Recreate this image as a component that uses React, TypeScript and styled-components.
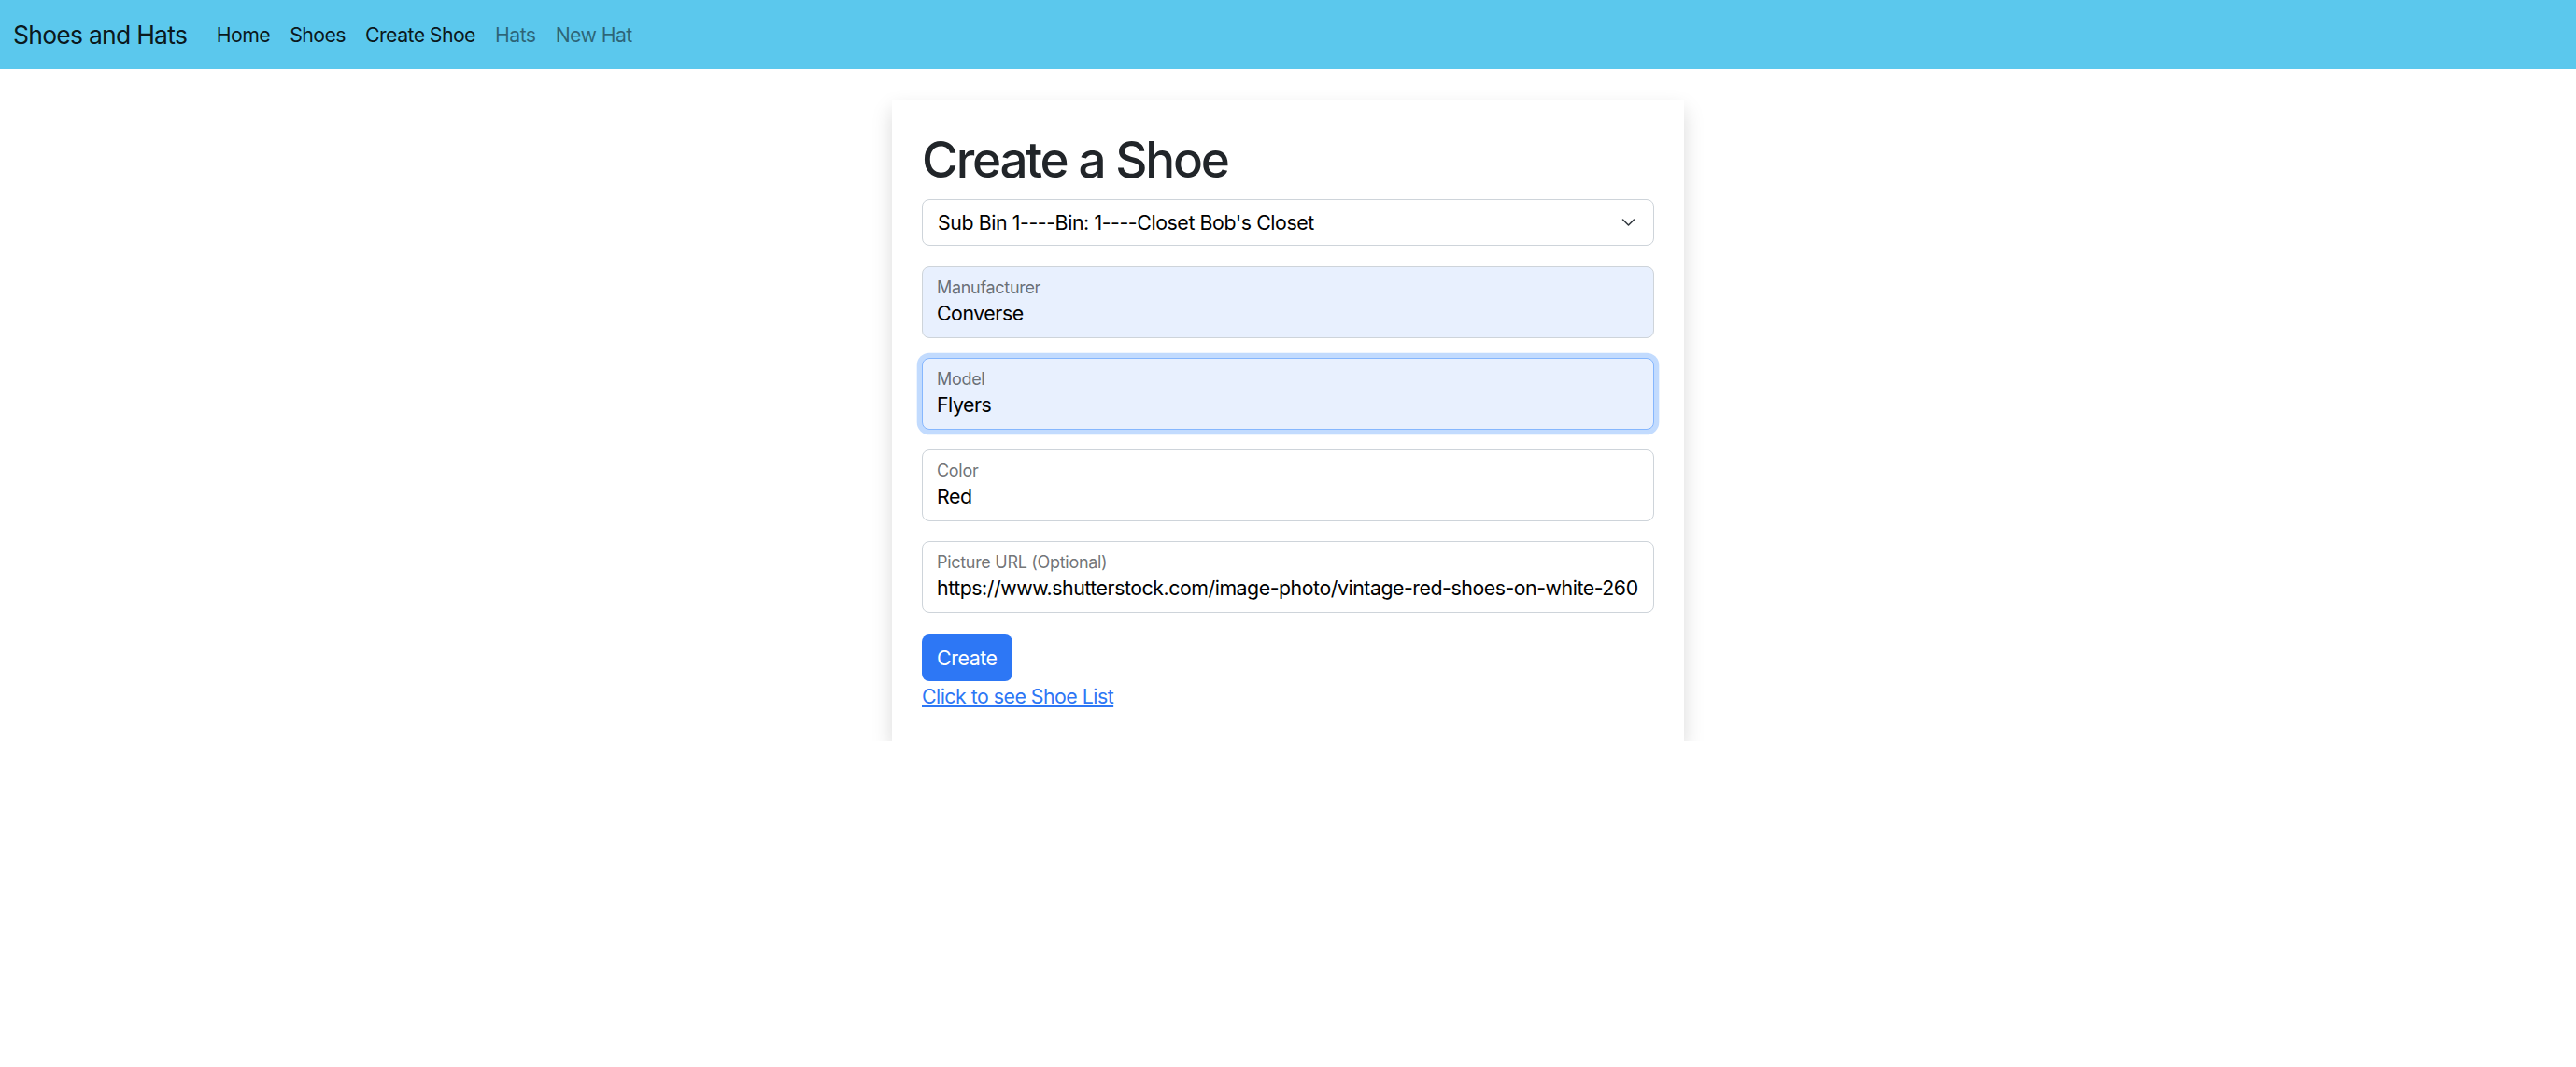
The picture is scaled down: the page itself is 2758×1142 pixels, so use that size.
import styled, { createGlobalStyle } from 'styled-components';

const GlobalStyle = createGlobalStyle`
    body {
        margin: 0;
        font-family: Inter, "Noto Sans", sans-serif;
        color: #212529;
        background: #fff;
    }
    * {
        box-sizing: border-box;
    }
`;

const navLinks = [
    { label: 'Home', active: true },
    { label: 'Shoes', active: true },
    { label: 'Create Shoe', active: true },
    { label: 'Hats', active: false },
    { label: 'New Hat', active: false },
];

const fields = [
    { label: 'Manufacturer', value: 'Converse', autofill: true, focused: false },
    { label: 'Model', value: 'Flyers', autofill: true, focused: true },
    { label: 'Color', value: 'Red', autofill: false, focused: false },
    {
        label: 'Picture URL (Optional)',
        value: 'https://www.shutterstock.com/image-photo/vintage-red-shoes-on-white-260nw-92008067.jpg',
        autofill: false,
        focused: false,
    },
];

export default function App() {
    return (
        <>
            <GlobalStyle />
            <StyledNav>
                <StyledBrand>Shoes and Hats</StyledBrand>
                {navLinks.map((l) => (
                    <StyledNavLink key={l.label} $active={l.active}>
                        {l.label}
                    </StyledNavLink>
                ))}
            </StyledNav>
            <StyledCard>
                <StyledTitle>Create a Shoe</StyledTitle>
                <StyledSelect>
                    <span>Sub Bin 1----Bin: 1----Closet Bob's Closet</span>
                    <svg width="21" height="16" viewBox="0 0 16 16">
                        <path
                            d="m2 5 6 6 6-6"
                            fill="none"
                            stroke="#343a40"
                            strokeWidth="1.6"
                            strokeLinecap="round"
                            strokeLinejoin="round"
                        />
                    </svg>
                </StyledSelect>
                {fields.map((f) => (
                    <StyledField key={f.label} $autofill={f.autofill} $focused={f.focused}>
                        <StyledLabel>{f.label}</StyledLabel>
                        <StyledInput defaultValue={f.value} readOnly />
                    </StyledField>
                ))}
                <StyledButton>Create</StyledButton>
                <StyledLink href="#">Click to see Shoe List</StyledLink>
            </StyledCard>
        </>
    );
}

const StyledNav = styled.nav`
    height: 74px;
    background-color: #5bc8ed;
    display: flex;
    align-items: center;
    padding-left: 14px;
`;

const StyledBrand = styled.span`
    font-size: 26.5px;
    color: rgba(0, 0, 0, 0.9);
    margin-right: 21px;
    letter-spacing: -0.75px;
`;

const StyledNavLink = styled.span<{ $active: boolean }>`
    font-size: 21.3px;
    padding: 0 10.6px;
    color: ${(p) => (p.$active ? 'rgba(0, 0, 0, 0.9)' : 'rgba(0, 0, 0, 0.5)')};
    letter-spacing: -0.6px;
`;

const StyledCard = styled.div`
    width: 848px;
    margin: 33px auto 0;
    padding: 32px;
    background: #fff;
    box-shadow: 0 10px 21px rgba(0, 0, 0, 0.15);
    display: flex;
    flex-direction: column;
    align-items: flex-start;
`;

const StyledTitle = styled.h1`
    margin: 0 0 10px;
    font-size: 53px;
    font-weight: 500;
    line-height: 64px;
    letter-spacing: -2.2px;
    color: #212529;
`;

const StyledSelect = styled.div`
    align-self: stretch;
    height: 50px;
    display: flex;
    align-items: center;
    justify-content: space-between;
    padding: 0 16px;
    border: 1px solid #ced4da;
    border-radius: 8px;
    font-size: 21.3px;
    color: #000;
    margin-bottom: 22px;
    letter-spacing: -0.4px;
`;

const StyledField = styled.div<{ $autofill: boolean; $focused: boolean }>`
    align-self: stretch;
    height: 77px;
    display: flex;
    flex-direction: column;
    padding: 12px 16px 0 15px;
    border: 1px solid ${(p) => (p.$focused ? '#86b7fe' : '#ced4da')};
    border-radius: 8px;
    background: ${(p) => (p.$autofill ? '#e8f0fe' : '#fff')};
    box-shadow: ${(p) => (p.$focused ? '0 0 0 5.3px rgba(13, 110, 253, 0.25)' : 'none')};
    margin-bottom: 21px;
    overflow: hidden;
`;

const StyledLabel = styled.span`
    font-size: 18px;
    line-height: 20px;
    color: rgba(33, 37, 41, 0.65);
    letter-spacing: -0.3px;
`;

const StyledInput = styled.input`
    width: 100%;
    margin-top: 3px;
    border: none;
    outline: none;
    padding: 0;
    background: transparent;
    font-family: inherit;
    font-size: 21.3px;
    line-height: 28px;
    height: 28px;
    color: #000;
    letter-spacing: -0.45px;
`;

const StyledButton = styled.button`
    margin-top: 2px;
    height: 50px;
    padding: 0 16px;
    border: none;
    border-radius: 8px;
    background-color: #2d77f5;
    color: #fff;
    font-family: inherit;
    font-size: 21.3px;
    letter-spacing: -0.4px;
`;

const StyledLink = styled.a`
    font-size: 21.3px;
    line-height: 32px;
    color: #2d77f5;
    text-decoration: underline;
    letter-spacing: -0.5px;
`;
